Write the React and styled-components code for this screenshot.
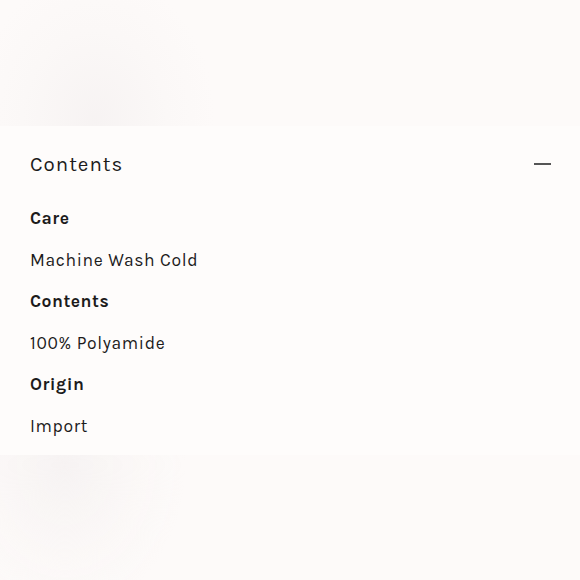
import styled, { createGlobalStyle } from 'styled-components';

const GlobalStyle = createGlobalStyle`
  html, body { margin: 0; padding: 0; background: #fdfaf9; }
  body { font-family: 'Karla', 'Lato', 'Noto Sans', sans-serif; color: #1c1b1b; }
`;

const Page = styled.div`
  width: 580px; height: 580px; display: flex; flex-direction: column;
  overflow: hidden; background: #fdfaf9;
`;

// faint product-photo edges above and below the accordion
const PhotoBand = styled.div`
  height: ${({ $h }) => $h}px;
  flex: ${({ $grow }) => ($grow ? 1 : 'none')};
  background:
    radial-gradient(ellipse 120px 150px at ${({ $spot }) => $spot}, rgba(244, 240, 240, 0.7), rgba(248, 245, 244, 0.4) 60%, transparent 100%),
    #fdfaf9;
`;

const Panel = styled.section`
  background: #fefcfb;
  padding: 26px 30px 7px;
`;

const Header = styled.div`
  display: flex; align-items: center; justify-content: space-between;
  height: 24px;
`;

const HeaderTitle = styled.h2`
  margin: 0; font-size: 20.5px; font-weight: 400; letter-spacing: 1px;
  line-height: 24px;
`;

const Minus = styled.span`
  width: 17px; height: 1.5px; background: #555; margin-right: -1px;
`;

const List = styled.dl`
  margin: 22px 0 0; padding: 0;
`;

const Term = styled.dt`
  font-size: 17.5px; font-weight: 700; letter-spacing: 0.5px; line-height: 41.6px;
`;

const Detail = styled.dd`
  margin: 0; font-size: 17.5px; font-weight: 400; letter-spacing: 0.65px; line-height: 41.6px;
`;

const details = [
  { term: 'Care', value: 'Machine Wash Cold' },
  { term: 'Contents', value: '100% Polyamide' },
  { term: 'Origin', value: 'Import' },
];

export default function App() {
  return (
    <Page>
      <GlobalStyle />
      <PhotoBand $h={126} $spot="95px 120px" />
      <Panel>
        <Header>
          <HeaderTitle>Contents</HeaderTitle>
          <Minus />
        </Header>
        <List>
          {details.map(d => (
            <div key={d.term}>
              <Term>{d.term}</Term>
              <Detail>{d.value}</Detail>
            </div>
          ))}
        </List>
      </Panel>
      <PhotoBand $grow $spot="65px 10px" />
    </Page>
  );
}
